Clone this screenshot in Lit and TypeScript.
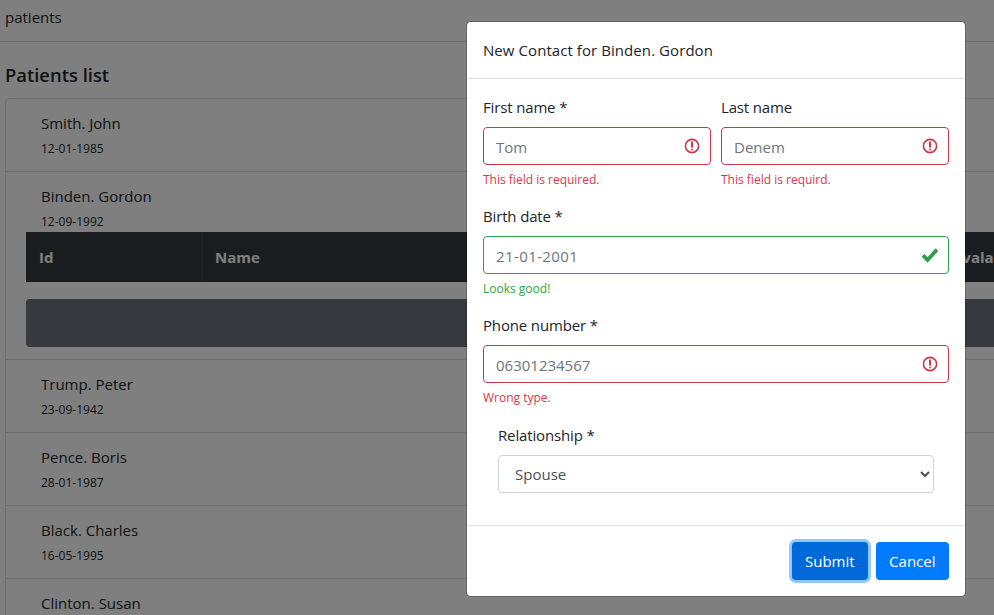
import { LitElement, html, css } from "lit";
import { customElement } from "lit/decorators.js";

const patients = [
  { name: "Smith. John", birth: "12-01-1985" },
  { name: "Binden. Gordon", birth: "12-09-1992", open: true },
  { name: "Trump. Peter", birth: "23-09-1942" },
  { name: "Pence. Boris", birth: "28-01-1987" },
  { name: "Black. Charles", birth: "16-05-1995" },
  { name: "Clinton. Susan", birth: "" },
];

const alertIcon = html`<svg class="state" viewBox="0 0 16 16" fill="none" stroke="#c9384a">
  <circle cx="8" cy="8" r="6.6" stroke-width="1.6"></circle>
  <path d="M8 4.2v4.6" stroke-width="2" stroke-linecap="round"></path>
  <circle cx="8" cy="11.5" r="1" fill="#c9384a" stroke="none"></circle>
</svg>`;

const checkIcon = html`<svg class="state" viewBox="0 0 16 16" fill="none" stroke="#2f9e50">
  <path d="M1 8.2l4.6 4.8L15 2.6" stroke-width="3.8"></path>
</svg>`;

@customElement("app-root")
export class AppRoot extends LitElement {
  static styles = css`
    :host {
      display: block;
      position: relative;
      width: 994px;
      height: 615px;
      overflow: hidden;
      background: #fff;
      color: #212529;
      font-family: "Open Sans", "Liberation Sans", sans-serif;
      font-size: 15px;
      line-height: 24px;
    }
    .topbar {
      height: 42px;
      padding: 5px 5px 0;
      box-sizing: border-box;
      border-bottom: 1px solid rgba(0, 0, 0, 0.15);
    }
    .content {
      padding: 0 5px;
      width: 1040px;
    }
    h1 {
      margin: 21px 0 11px;
      font-size: 18.4px;
      line-height: 24px;
      font-weight: 600;
    }
    .list {
      border: 1px solid rgba(0, 0, 0, 0.125);
      border-radius: 4px;
    }
    .item {
      box-sizing: border-box;
      height: 73px;
      padding: 12px 20px 0;
      border-top: 1px solid rgba(0, 0, 0, 0.125);
    }
    .item:first-child {
      height: 72px;
      border-top: 0;
    }
    .item.open {
      height: 188px;
    }
    .who {
      padding-left: 15px;
    }
    .who small {
      display: block;
      margin-top: 2px;
      font-size: 12px;
      line-height: 24px;
    }
    .thead {
      display: grid;
      grid-template-columns: 176px 737px 1fr;
      height: 50px;
      margin-top: -2px;
      background: #343a40;
      color: #fff;
      font-weight: 700;
      line-height: 50px;
    }
    .thead span {
      padding-left: 13px;
    }
    .thead span + span {
      padding-left: 12px;
      border-left: 1px solid #3d444b;
    }
    .thead span:last-child {
      padding-left: 13px;
      border-left: 0;
    }
    .empty {
      height: 48px;
      margin-top: 17px;
      background: #6c757d;
      border-radius: 4px;
    }
    .backdrop {
      position: absolute;
      inset: 0;
      background: rgba(0, 0, 0, 0.5);
    }
    .modal {
      position: absolute;
      left: 466px;
      top: 21px;
      width: 500px;
      height: 576px;
      box-sizing: border-box;
      display: flex;
      flex-direction: column;
      background: #fff;
      background-clip: padding-box;
      border: 1px solid rgba(0, 0, 0, 0.2);
      border-radius: 5px;
    }
    .modal-title {
      height: 57px;
      padding: 16px 16px 0;
      box-sizing: border-box;
      border-bottom: 1px solid #dee2e6;
      letter-spacing: 0.07px;
    }
    form {
      flex: 1;
      padding: 16px 16px 0;
    }
    .row {
      display: grid;
      grid-template-columns: 1fr 1fr;
      gap: 10px;
    }
    .field {
      height: 109px;
    }
    label {
      display: block;
      line-height: 24px;
      margin-bottom: 8px;
      letter-spacing: -0.15px;
    }
    .control {
      display: flex;
      align-items: center;
      justify-content: space-between;
      height: 38px;
      box-sizing: border-box;
      padding: 0 10px 0 12px;
      border: 1px solid #c9384a;
      border-radius: 4px;
      color: #6c757d;
    }
    .control span {
      padding-top: 2px;
    }
    .control.ok {
      border-color: #2f9e50;
    }
    .control.ok span {
      letter-spacing: 0.4px;
    }
    .state {
      width: 16px;
      height: 16px;
      flex: none;
    }
    .hint {
      margin-top: 3px;
      font-size: 12px;
      line-height: 24px;
      color: #dc3545;
    }
    .hint.ok {
      color: #28a745;
    }
    .select-field {
      padding: 1px 15px 0;
    }
    select {
      display: block;
      width: 100%;
      height: 38px;
      padding: 0 12px;
      border: 1px solid #ced4da;
      border-radius: 4px;
      background: #fff;
      color: #495057;
      font: inherit;
    }
    .modal-foot {
      display: flex;
      justify-content: flex-end;
      gap: 8px;
      height: 71px;
      box-sizing: border-box;
      padding: 16px;
      border-top: 1px solid #dee2e6;
    }
    button {
      height: 38px;
      padding: 0 13.5px;
      border: 0;
      border-radius: 4px;
      background: #007bff;
      color: #fff;
      font: inherit;
    }
    button.focus {
      padding: 0 13px;
      background: #0069d9;
      box-shadow: 0 0 0 3px rgba(38, 143, 255, 0.5);
    }
  `;

  render() {
    return html`
      <div class="topbar">patients</div>
      <div class="content">
        <h1>Patients list</h1>
        <div class="list">
          ${patients.map(
            (p) => html`
              <div class="item ${p.open ? "open" : ""}">
                <div class="who">${p.name}<small>${p.birth}</small></div>
                ${p.open
                  ? html`<div class="thead"><span>Id</span><span>Name</span><span>Avalability</span></div>
                      <div class="empty"></div>`
                  : ""}
              </div>
            `
          )}
        </div>
      </div>
      <div class="backdrop"></div>
      <div class="modal">
        <div class="modal-title">New Contact for Binden. Gordon</div>
        <form>
          <div class="row">
            <div class="field">
              <label>First name *</label>
              <div class="control"><span>Tom</span> ${alertIcon}</div>
              <div class="hint">This field is required.</div>
            </div>
            <div class="field">
              <label>Last name</label>
              <div class="control"><span>Denem</span> ${alertIcon}</div>
              <div class="hint">This field is requird.</div>
            </div>
          </div>
          <div class="field">
            <label>Birth date *</label>
            <div class="control ok"><span>21-01-2001</span> ${checkIcon}</div>
            <div class="hint ok">Looks good!</div>
          </div>
          <div class="field">
            <label>Phone number *</label>
            <div class="control"><span>06301234567</span> ${alertIcon}</div>
            <div class="hint">Wrong type.</div>
          </div>
          <div class="select-field">
            <label>Relationship *</label>
            <select><option>Spouse</option></select>
          </div>
        </form>
        <div class="modal-foot">
          <button class="focus">Submit</button>
          <button>Cancel</button>
        </div>
      </div>
    `;
  }
}
